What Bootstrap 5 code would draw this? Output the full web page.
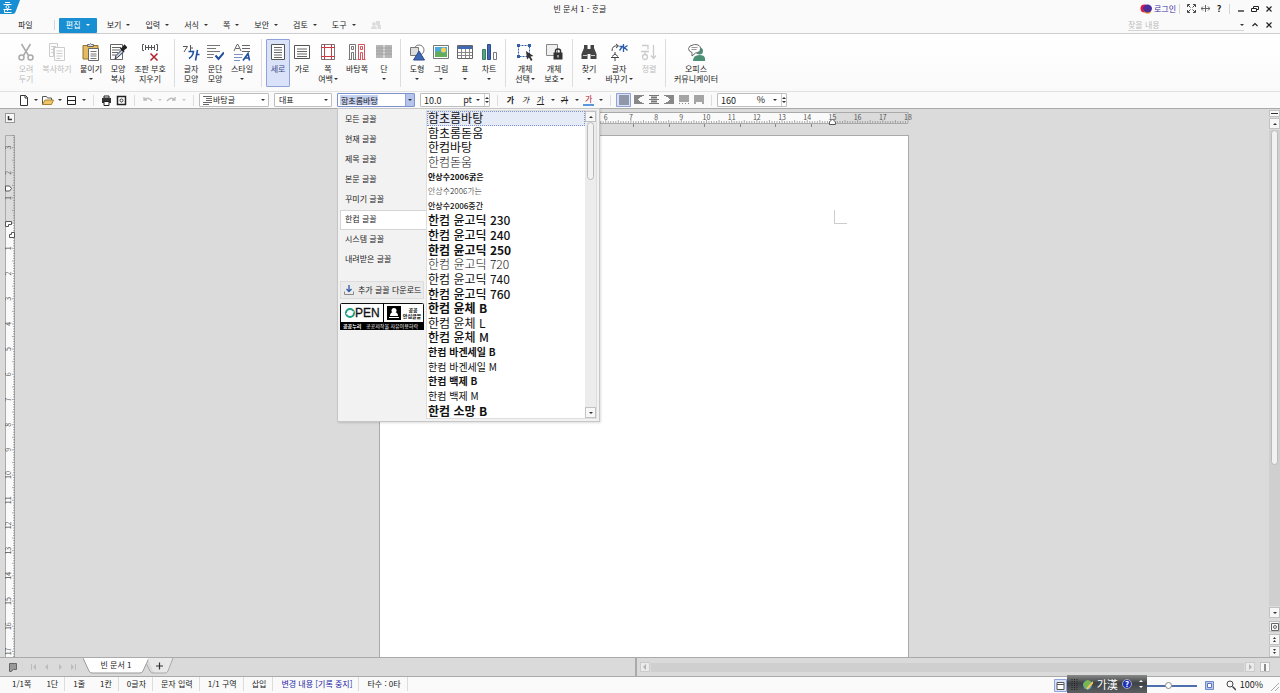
<!DOCTYPE html>
<html lang="ko">
<head>
<meta charset="utf-8">
<meta name="viewport" content="width=device-width, initial-scale=1">
<title>빈 문서 1 - ᄒᆞᆫ글</title>
<link href="https://cdn.jsdelivr.net/npm/bootstrap@5.3.0/dist/css/bootstrap.min.css" rel="stylesheet">
<style>
:root{--ink:#222;--edge:#bdbdbd;--desk:#dbdbdb;--blue:#178fd2}
body{font-family:"Noto Sans CJK KR","Noto Sans",sans-serif;font-size:8px;line-height:10px;color:var(--ink);background:#fafafa;overflow:hidden}
button,input,select{font:inherit;color:inherit}
button{background:none;border:0;padding:0;line-height:10px}
a{color:inherit;text-decoration:none}
svg{display:block;flex:none}
.caret{width:0;height:0;border:2px solid transparent;border-top-color:#333;border-bottom:0;flex:none}
/* title and menu */
.titlebar{height:17px}
.applogo{width:20px;height:14px}
.winbtn{width:14px;height:14px;display:flex;align-items:center;justify-content:center}
.thin{width:1px;height:10px;background:#d5d5d5;margin:0 4px 0 3px}
.menubar{height:17px;border-bottom:1px solid #cdcdcd}
.menubar .menu{display:flex;align-items:center;gap:5px;height:15px}
.menu-file{margin:0 18px 0 2px}
.menu-list{gap:15px;margin-left:10px}
.menu-on{background:var(--blue);color:#fff;width:38px;justify-content:center;border-radius:1px}
.menu-on .caret{border-top-color:#fff}
.find{width:116px;border-bottom:1px solid #d5d5d5;height:12px}
.find input{border:0;background:none;outline:0;padding:0;width:100px;height:11px}
.find input::placeholder{color:#bbb;opacity:1}
.login{color:#3b2fa8}
/* ribbon */
.ribbon{height:58px;padding:5px 14px 4px;background:linear-gradient(#fff,#fafafa);border-bottom:1px solid #e2e2e2}
.rb{display:flex;flex-direction:column;align-items:center;padding-top:3px;width:24px;white-space:nowrap;border:1px solid transparent}
.rb svg{margin-bottom:3px}
.rb .caret{margin-top:4px}
.rb span .caret{display:inline-block;margin:0 0 2px 1px}
.w-a{width:28px}.w-b{width:30px}.w-m{width:36px}.w-c{width:38px}.w-l{width:40px}.w-d{width:52px}
.rb.on{background:#d9e2f8;border-color:#8fa3d8;border-radius:1px;color:#3a4a86}
.off{color:#bbb}
.rsep{width:1px;margin:0 4px;background:#ddd}
/* toolbar */
.tools{height:17px;padding:0 16px;border-bottom:1px solid #aaa}
.tb{width:15px;height:14px;display:flex;align-items:center;justify-content:center}
.cr{width:9px;height:14px;display:flex;align-items:center;justify-content:center}
.tb.on{background:#d9e2f8;box-shadow:inset 0 0 0 1px #8fa3d8;border-radius:1px}
.tsep{width:1px;height:11px;background:#ddd;margin:0 5px}
.fields{display:flex;gap:5px;margin-right:2px}
.field{height:14px;border:1px solid var(--edge);border-radius:1px;background:#fff;display:flex;align-items:center;position:relative}
.field select{appearance:none;border:0;background:none;width:100%;height:12px;padding:0 8px 0 4px;outline:0}
.field input{border:0;background:none;outline:0;padding:0 0 0 3px;height:12px;min-width:0}
.field>.caret{position:absolute;right:3px;top:5px}
.f-style{width:70px}.f-lang{width:58px}.f-font{width:78px}.f-size,.f-zoom{width:70px}
.f-style select{padding-left:13px}
.f-style svg{position:absolute;left:3px;top:2px}
.f-font{border-color:#7d92cf}
.f-font .pick{width:9px;height:12px;background:#b5c4ec;border-left:1px solid #8fa3d8;display:flex;align-items:center;justify-content:center}
.f-font input{background:linear-gradient(#c5d1f0,#c5d1f0) 2px 1px/38px 10px no-repeat;flex:1}
.spin{width:9px;border-left:1px solid #ccc;height:12px;display:flex;flex-direction:column;justify-content:space-evenly;align-items:center}
.up{transform:rotate(180deg)}
.num{font-size:9px}
/* font menu */
.fontmenu{position:absolute;left:-1px;top:14px;width:263px;height:314px;background:#f2f2f2;border:1px solid #c6c6c6;box-shadow:1px 1px 2px #0002;z-index:5;padding:1px 2px 2px}
.kinds{width:86px}
.kinds .list-group-item{font-size:8px;line-height:10px;height:20px;padding:3px 0 5px 4px;border:1px solid transparent;background:none;color:var(--ink);border-radius:0;text-align:left;margin:0}
.kinds .list-group-item.now{background:#fff;border-color:#d5d5d5;border-right:0}
.getfont{width:84px;height:18px;margin-top:11px;border:1px solid #ddd;background:#ebebeb;display:flex;align-items:center;gap:4px;padding-left:3px;white-space:nowrap}
.open-mark{margin-top:4px}
.faces{background:#fff;border:1px solid #ddd}
.faces ul{margin:0;padding:0;list-style:none;display:flex;flex-direction:column;width:158px}
.faces li{flex:1;font-size:12px;line-height:14px;padding-left:1px;white-space:nowrap;color:#111}
.faces li.now{background:#e6ebf8;outline:1px dotted #7d92cf;outline-offset:-1px}
.faces .slim{font-size:8px}
.faces .mid{font-size:10px}
.lt{font-weight:300}.bd{font-weight:700}.md{font-weight:500}
.vbar{width:11px;background:#ececec}
.sbtn{width:11px;height:11px;border:1px solid #c2c2c2;background:#f7f7f7;display:flex;align-items:center;justify-content:center}
.thumb{width:7px;margin:0 2px;background:#f2f2f2;border:1px solid #bbb;border-radius:4px}
.vbar .thumb{height:58px}
/* document */
.desk{background:var(--desk);min-height:0}
.side{width:18px;padding:4px 0 0 5px}
.tabkind{width:10px;height:10px;border:1px solid #999;background:#f7f7f7}
.vruler{margin-top:12px}
.center{min-width:0;padding-top:3px}
.paper{width:100%;max-width:530px;margin-top:6px;background:#fff;border:1px solid #aaa;border-bottom:0}
.cropmark{width:13px;height:14px;border:solid #ccc;border-width:0 0 1px 1px;margin:74px 61px 0 auto}
.right{width:11px;padding-top:1px;gap:1px}
.right .track{flex:1;background:#cfcfcf}
.right .thumb{height:335px}
.sbtn.flat{height:7px}
.sbtn.seek{margin:2px 0 1px}
/* tabs, status */
.tabrow{height:20px;background:#dadada;border:solid #aaa;border-width:1px 0}
.nav-mark{width:13px;display:flex;justify-content:center}
.doctab{position:relative;height:16px;width:66px;padding:0 0 2px}
.doctab svg{position:absolute;left:0;top:0}
.doctab span{position:relative}
.plus{position:relative;width:28px;height:16px;margin-left:-3px}
.hbar{border-left:2px solid #aaa;padding:0 2px 0 3px;width:50.7%;gap:1px}
.hbar .track{flex:1;background:#cfcfcf;height:9px}
.hbar .sbtn{width:10px;height:10px;opacity:.6}
.status{height:16px}
.status>.cell{border-right:1px solid #ddd;height:14px;padding:2px 6px 0 8px;white-space:nowrap}
.status>.bare{border-color:transparent}
.changes{color:#1c1ca8}
.ime{background:linear-gradient(#8a8a8a,#3e4244 45%,#5c6062);width:80px;height:18px;margin-top:-2px;color:#fff;z-index:2;position:relative;font-size:11px;line-height:14px;white-space:nowrap;gap:4px}
.ime .caret{border-top-color:#fff}
.scale-slider{appearance:none;width:50px;height:7px;background:linear-gradient(#4d6fae,#4d6fae) 0 3px/100% 2px no-repeat}
.scale-slider::-webkit-slider-thumb{appearance:none;width:7px;height:7px;border:1px solid #888;border-radius:50%;background:#fff}
</style>
</head>
<body class="d-flex flex-column vh-100">
<header>
 <div class="titlebar d-flex align-items-center">
  <svg class="applogo align-self-start" viewBox="0 0 20 14"><path d="M0 0h20l-4.500 12q-.7 2-3 2H0z" fill="#178fd2"/><path d="M5 2.500h5M3.500 4.500h8M7.500 9.500v1.500M3.500 9.500h8M4.500 10v2.500h7" stroke="#fff" fill="none"/><circle cx="7.500" cy="7" r="1.500" fill="none" stroke="#fff"/></svg>
  <div class="flex-fill text-center">빈 문서 1 - ᄒᆞᆫ글</div>
  <div class="d-flex align-items-center pe-1">
   <a href="#" class="login d-flex align-items-center"><svg width="14" height="10" viewBox="0 0 14 10"><circle cx="4.500" cy="4.500" r="4" fill="#e2173f"/><circle cx="7.500" cy="6" r="3.800" fill="#f39a2b"/><ellipse cx="7.500" cy="4.500" rx="4.500" ry="4" fill="#4b2e9d"/></svg>로그인</a>
   <i class="thin"></i>
   <button class="winbtn" aria-label="전체 화면"><svg width="9" height="9" viewBox="0 0 9 9" fill="none" stroke="#333"><path d="M.5 3V.5H3M6 .5h2.500V3M8.500 6v2.500H6M3 8.500H.5V6M1 1l2.500 2.500M8 1L5.500 3.500M8 8L5.500 5.500M1 8l2.500-2.500" stroke-width=".9"/></svg></button>
   <button class="winbtn" aria-label="창 나누기"><svg width="9" height="9" viewBox="0 0 9 9" fill="none" stroke="#666"><path d="M4.500 1v7M0 4.500h9M2 2.500l-2 2 2 2M7 2.500l2 2-2 2"/></svg></button>
   <button class="winbtn fw-bold num" aria-label="도움말">?</button>
   <i class="thin"></i>
   <button class="winbtn" aria-label="최소화"><svg width="8" height="8"><path d="M1 6h6" stroke="#222" stroke-width="1.300"/></svg></button>
   <button class="winbtn" aria-label="이전 크기로"><svg width="8" height="8" fill="none" stroke="#222"><path d="M2.500 3V1.500h5v3H6M.5 3.500h5v3h-5z"/></svg></button>
   <button class="winbtn" aria-label="닫기"><svg width="8" height="8"><path d="M1.500 1.500l5 5M6.500 1.500l-5 5" stroke="#222" stroke-width="1.200"/></svg></button>
  </div>
 </div>
 <nav class="menubar d-flex align-items-center ps-3 pe-1">
  <a href="#" class="menu menu-file">파일</a><i class="thin"></i>
  <button class="menu menu-on">편집<i class="caret"></i></button>
  <div class="menu-list d-flex">
   <button class="menu">보기<i class="caret"></i></button><button class="menu">입력<i class="caret"></i></button><button class="menu">서식<i class="caret"></i></button><button class="menu">쪽<i class="caret"></i></button><button class="menu">보안<i class="caret"></i></button><button class="menu">검토<i class="caret"></i></button><button class="menu">도구<i class="caret"></i></button>
   <button class="menu" aria-label="공유"><svg width="10" height="10" fill="#ddd"><circle cx="3" cy="4" r="2"/><path d="M5 1h4v4H5zM0 9q0-3 3-3t3 3zM6 5h4v4H7z"/></svg></button>
  </div>
  <label class="find d-flex align-items-center ms-auto me-1"><input type="text" placeholder="찾을 내용" aria-label="찾을 내용"><i class="caret ms-auto"></i></label>
  <button class="winbtn" aria-label="리본 접기"><svg width="8" height="8"><path d="M1.500 5L4 2.500 6.500 5" stroke="#222" fill="none" stroke-width="1.200"/></svg></button>
  <button class="winbtn" aria-label="문서 닫기"><svg width="8" height="8"><path d="M1.500 1.500l5 5M6.500 1.500l-5 5" stroke="#222" stroke-width="1.200"/></svg></button>
 </nav>
 <div class="ribbon d-flex">
  <button class="rb off"><svg width="18" height="18" fill="none" stroke="#aaa" stroke-width="1.500"><path d="M4.500 1l7 11.500M13.500 1l-7 11.500"/><circle cx="4.500" cy="14.500" r="2.500"/><circle cx="13.500" cy="14.500" r="2.500"/></svg><span>오려</span><span>두기</span></button>
  <button class="rb w-c off"><svg width="18" height="18" fill="#fdfdfd" stroke="#ccc"><path d="M1.500.5h8v4h-4v9h-4zM3 3.500h5M3 6.500h2M3 9.500h2M6.500 4.500h10v13h-10zM8.500 8h6M8.500 10.500h6M8.500 13h6M8.500 15.500h4"/></svg><span>복사하기</span></button>
  <button class="rb w-b"><svg width="18" height="18"><path d="M1 2.500h15V16H1z" fill="#e5ba61" stroke="#93752f"/><path d="M5.500 3.500v-2h2L8.500.5l1 1h2v2z" fill="#ddd" stroke="#666"/><path d="M6.500 5.500h10v12h-10z" fill="#fff" stroke="#666"/><path d="M8.500 8.500h6M8.500 11h6M8.500 13h6M8.500 15.500h6" stroke="#777"/></svg><span>붙이기</span><i class="caret"></i></button>
  <button class="rb"><svg width="18" height="18"><path d="M1.500 1.500h12v15h-12z" fill="#fff" stroke="#666"/><path d="M3 4.500h9M3 7h8M3 9.500h6M3 12h4" stroke="#666"/><path d="M6 16l1-3.500 6-6 2 2-6.500 6z" fill="#b8cbea" stroke="#333"/><path d="M11.500 5l3.500 3.500M12.500 6.500l3-4 2 2-4 3z" stroke="#222" stroke-width="1.500" fill="#222"/></svg><span>모양</span><span>복사</span></button>
  <button class="rb w-l"><svg width="18" height="18" fill="none" stroke="#555"><path d="M3 1.500H1.500v6H3M15 1.500h1.500v6H15M4.500 2v5M7.500 2v5M10.500 2v5M13.500 2v5M4 4.500h10"/><path d="M9.500 10.500l7 7M16.500 10.500l-7 7" stroke="#b0202e" stroke-width="1.500"/></svg><span>조판 부호</span><span>지우기</span></button>
  <i class="rsep"></i>
  <button class="rb"><svg width="18" height="18" fill="none"><path d="M1 3.500h4.500L2 9M8.500 2v6M8.500 5H11" stroke="#555"/><path d="M6.500 8.500h5Q11 13 7 15.500M15.500 7l-2 10.500M14.500 11.500h3" stroke="#1f4fa0" stroke-width="1.600"/></svg><span>글자</span><span>모양</span></button>
  <button class="rb"><svg width="18" height="18" fill="none"><path d="M1 2.500h13M1 5.500h9M1 8.500h13M1 11.500h7M1 14.500h6" stroke="#777"/><path d="M9.500 12.500l3 3.500L18 9.500" stroke="#1f4fa0" stroke-width="2"/></svg><span>문단</span><span>모양</span></button>
  <button class="rb w-b"><svg width="18" height="18" fill="none"><path d="M1 8L4 1.500h1L8 8M2.500 5.500h4M9 2.500h8M9 5.500h8M9 8.500h8" stroke="#666"/><path d="M10 17.500l5-7 1.500 7M12 15h4" stroke="#1f4fa0" stroke-width="1.600"/><path d="M1 11.500h9M1 14.500h8M1 17.500h6" stroke="#7a93c4"/></svg><span>스타일</span><i class="caret"></i></button>
  <i class="rsep"></i>
  <button class="rb on"><svg width="18" height="18"><path d="M2.500 1.500h13v15h-13z" fill="#fff" stroke="#555"/><path d="M5 4.500h8M5 7h8M5 9.500h8M5 12h8M5 14.500h8" stroke="#666"/></svg><span>세로</span></button>
  <button class="rb"><svg width="18" height="18"><path d="M1.500 2.500h15v13h-15z" fill="#fff" stroke="#555"/><path d="M4 6h10M4 8.500h10M4 11h10M4 13.500h10" stroke="#666"/></svg><span>가로</span></button>
  <button class="rb w-a"><svg width="18" height="18" fill="none"><path d="M2.500 1.500h13v15h-13z" stroke="#777" fill="#fff"/><path d="M5.500 1v16M12.500 1v16M2 4.500h14M2 13.500h14" stroke="#cc3b44"/></svg><span>쪽</span><span>여백<i class="caret"></i></span></button>
  <button class="rb w-b"><svg width="18" height="18" fill="none"><path d="M1.500 16V1.500h6V16M3.500 17V9.500h2V17M3.500 3.500h2v3h-2z" stroke="#777"/><path d="M.5 16.500h3M5.500 16.500h3" stroke="#777"/><path d="M10.500 16V1.500h6V16M12.500 17V9.500h2V17M12.500 3.500h2v3h-2z" stroke="#d4555e"/><path d="M9.500 16.500h3M14.500 16.500h3" stroke="#d4555e"/></svg><span>바탕쪽</span></button>
  <button class="rb"><svg width="18" height="18"><path d="M1 2h7.500v13H1zM9.500 2H17v13H9.500z" fill="#b5b5b5"/><path d="M1 5h16M1 8h16M1 11h16" stroke="#a2a2a2"/></svg><span>단</span><i class="caret"></i></button>
  <i class="rsep"></i>
  <button class="rb"><svg width="18" height="18"><circle cx="11" cy="7" r="5" fill="#fff" stroke="#777"/><path d="M2.500 4.500h8v8h-8z" fill="#ddd" stroke="#777"/><path d="M11 8l5.500 9h-11z" fill="#3e67b3" stroke="#2b4b8c"/></svg><span>도형</span><i class="caret"></i></button>
  <button class="rb"><svg width="18" height="18"><path d="M1.500 2.500h15v13h-15z" fill="#fff" stroke="#777"/><path d="M3 4h12v10H3z" fill="#4aa9df"/><path d="M3 14v-4q4-4 7 0l5-1v5z" fill="#63ad5a"/><circle cx="11.500" cy="7" r="2.500" fill="#f9d34b"/></svg><span>그림</span><i class="caret"></i></button>
  <button class="rb"><svg width="18" height="18"><path d="M1.500 2.500h15v13h-15z" fill="#fff" stroke="#666"/><path d="M2 3h14v3H2z" fill="#4169b0"/><path d="M2 9.500h14M2 12.500h14M5.500 6v9M9.500 6v9M13.500 6v9" stroke="#888"/></svg><span>표</span><i class="caret"></i></button>
  <button class="rb"><svg width="18" height="18"><path d="M2.500 6.500h3v10h-3z" fill="#57a184" stroke="#398064"/><path d="M7.500 1.500h3v15h-3z" fill="#3e67b3" stroke="#2b4b8c"/><path d="M13.500 9.500h3v7h-3z" fill="#fff" stroke="#777"/></svg><span>차트</span><i class="caret"></i></button>
  <i class="rsep"></i>
  <button class="rb w-b"><svg width="18" height="18"><path d="M2.500 2.500h11v11h-11z" fill="none" stroke="#345ca8" stroke-dasharray="2 1"/><path d="M1 1h3v3H1zM12 1h3v3h-3zM1 12h3v3H1z" fill="#345ca8"/><path d="M10 8l7.500 5-3 .5 2 3.500-1.500 1-2-3.500-2 2z" fill="#333"/></svg><span>개체</span><span>선택<i class="caret"></i></span></button>
  <button class="rb w-a"><svg width="18" height="18"><path d="M1.500 1.500h11v11h-11z" fill="#f0f0f0" stroke="#888"/><path d="M8.500 9.500h9v7h-9z" fill="#333"/><path d="M10.500 10V8q0-2 2.500-2t2.500 2v2" fill="none" stroke="#333" stroke-width="1.500"/><path d="M13 12v2.500" stroke="#fff"/></svg><span>개체</span><span>보호<i class="caret"></i></span></button>
  <i class="rsep"></i>
  <button class="rb"><svg width="18" height="18" fill="#444"><path d="M4 2h3.500v4h3V2H14v3l2.500 6v5h-6v-5h-3v5h-6v-5L4 5z"/><path d="M3 12.500h4M11 12.500h4" stroke="#ccc"/></svg><span>찾기</span><i class="caret"></i></button>
  <button class="rb w-m"><svg width="18" height="18" fill="none"><path d="M2 8q0-6 6-5M6 1l2.500 2L6 5" stroke="#444"/><path d="M13.500 1v8M9.500 3.500h3l-3 4M17.500 2.500l-3 2 3 3" stroke="#2c5cad" stroke-width="1.300"/><path d="M5 9v2l-3 2.500M5 11l3 2.500M1 14.500h8M5 15v3" stroke="#444"/></svg><span>글자</span><span>바꾸기<i class="caret"></i></span></button>
  <button class="rb off"><svg width="18" height="18" fill="none" stroke="#ccc" stroke-width="1.300"><path d="M2 2.500h6v4M1 8.500h8M5 9v2"/><circle cx="5" cy="14" r="2.500"/><path d="M13.500 2v13M11 12.500l2.500 3 2.500-3"/></svg><span>정렬</span></button>
  <i class="rsep"></i>
  <button class="rb w-d"><svg width="18" height="18"><circle cx="12.500" cy="8" r="3.500" fill="#4c9076"/><path d="M6 18q0-6 6.500-6t5.500 6z" fill="#4c9076"/><path d="M7.500 1.500q6 0 6 4t-5 4.500L5 13v-3.500q-3.500-1-3.500-4t6-4z" fill="#fff" stroke="#666"/><path d="M4.500 4.500h6M4.500 6.500h5" stroke="#999"/></svg><span>오피스</span><span>커뮤니케이터</span></button>
 </div>
 <div class="tools d-flex align-items-center">
  <button class="tb" aria-label="새 문서"><svg width="10" height="11"><path d="M1.500.5h5l2 2v8h-7zM6 .5V3h2.500" fill="#fff" stroke="#333"/></svg></button><button class="cr" aria-label="새 문서 메뉴"><i class="caret"></i></button>
  <button class="tb" aria-label="열기"><svg width="12" height="11"><path d="M.5 9.500v-8h4l1 1.500h4V5" fill="#fff" stroke="#555"/><path d="M.5 9.500L3 5h8.500L9.500 9.500z" fill="#efc667" stroke="#a8812f"/></svg></button><button class="cr" aria-label="열기 메뉴"><i class="caret"></i></button>
  <button class="tb" aria-label="저장"><svg width="11" height="11"><path d="M1.500 1.500v8h8v-8zM1.500 5.500h8" fill="none" stroke="#222"/></svg></button><button class="cr" aria-label="저장 메뉴"><i class="caret"></i></button>
  <i class="tsep"></i>
  <button class="tb" aria-label="인쇄"><svg width="11" height="11"><path d="M3 1h5v2H3z" stroke="#222" fill="#fff"/><path d="M1 3h9v5H1z" fill="#333"/><path d="M3 6.500h5v4H3z" fill="#fff" stroke="#222"/></svg></button>
  <button class="tb" aria-label="미리 보기"><svg width="11" height="11"><path d="M1.500 1.500h8v8h-8z" fill="#fff" stroke="#222" stroke-width="1.500"/><circle cx="5.500" cy="5.500" r="1.500" fill="none" stroke="#333"/></svg></button>
  <i class="tsep"></i>
  <button class="tb" aria-label="되돌리기"><svg width="11" height="10" fill="none" stroke="#bbb" stroke-width="1.300"><path d="M2 2v3h3M2 5q4-4 8 1"/></svg></button><button class="cr" aria-label="되돌리기 목록"><i class="caret opacity-25"></i></button>
  <button class="tb" aria-label="다시 실행"><svg width="11" height="10" fill="none" stroke="#bbb" stroke-width="1.300"><path d="M9 2v3H6M9 5Q5 1 1 6"/></svg></button><button class="cr" aria-label="다시 실행 목록"><i class="caret opacity-25"></i></button>
  <i class="tsep"></i>
  <div class="fields">
   <div class="field f-style"><svg width="9" height="9" stroke="#666"><path d="M0 .5h9M3 2.500h6M3 4.500h6M0 6.500h9M0 8.500h6"/></svg><select aria-label="스타일"><option>바탕글</option></select><i class="caret"></i></div>
   <div class="field f-lang"><select aria-label="언어"><option>대표</option></select><i class="caret"></i></div>
   <div class="field f-font"><input type="text" value="함초롬바탕" aria-label="글꼴"><button class="pick" aria-label="글꼴 목록"><i class="caret"></i></button>
    <div class="fontmenu d-flex">
     <div class="kinds">
      <div class="list-group">
       <button class="list-group-item">모든 글꼴</button><button class="list-group-item">현재 글꼴</button><button class="list-group-item">제목 글꼴</button><button class="list-group-item">본문 글꼴</button><button class="list-group-item">꾸미기 글꼴</button><button class="list-group-item now">한컴 글꼴</button><button class="list-group-item">시스템 글꼴</button><button class="list-group-item">내려받은 글꼴</button>
      </div>
      <button class="getfont"><svg width="10" height="10" fill="none"><path d="M5 0v6M2.500 4L5 6.500 7.500 4" stroke="#2d5aa8" stroke-width="1.300"/><path d="M.5 6.500v3h9v-3" stroke="#888"/></svg>추가 글꼴 다운로드</button>
      <svg class="open-mark" width="84" height="27" viewBox="0 0 84 27" font-family="Noto Sans CJK KR"><rect x=".5" y=".5" width="83" height="26" rx="1" fill="#fff" stroke="#111"/><path d="M0 19h84v8H0zM43 0h1v19h-1z"/><circle cx="10" cy="10" r="4" fill="none" stroke="#1e9d86" stroke-width="2"/><path d="M6 11q4-3 8-2" stroke="#fff" fill="none"/><text x="15" y="14" font-size="12" font-family="Liberation Sans" fill="#111" stroke="#111" stroke-width=".3">PEN</text><path d="M47 3h14v14H47z"/><circle cx="54" cy="7.500" r="2.500" fill="#fff"/><path d="M50 13q0-4 4-4t4 4zM49 14h10v1H49z" fill="#fff"/><text x="73" y="9" font-size="5" font-weight="700" text-anchor="middle">공공</text><text x="72" y="15" font-size="5" font-weight="700" text-anchor="middle">안심글꼴</text><text x="3" y="25" font-size="5" font-weight="700" fill="#fff">공공누리</text><text x="26" y="25" font-size="5" fill="#fff">공공저작물 자유이용허락</text></svg>
     </div>
     <div class="faces d-flex flex-fill">
      <ul role="listbox" aria-label="글꼴">
       <li class="now">함초롬바탕</li><li>함초롬돋움</li><li>한컴바탕</li><li class="lt">한컴돋움</li><li class="slim bd">안상수2006굵은</li><li class="slim lt">안상수2006가는</li><li class="slim md">안상수2006중간</li><li class="md">한컴 윤고딕 230</li><li class="md">한컴 윤고딕 240</li><li class="bd">한컴 윤고딕 250</li><li class="lt">한컴 윤고딕 720</li><li>한컴 윤고딕 740</li><li class="md">한컴 윤고딕 760</li><li class="bd">한컴 윤체 B</li><li>한컴 윤체 L</li><li class="md">한컴 윤체 M</li><li class="mid bd">한컴 바겐세일 B</li><li class="mid">한컴 바겐세일 M</li><li class="mid bd">한컴 백제 B</li><li class="mid">한컴 백제 M</li><li class="bd">한컴 소망 B</li>
      </ul>
      <div class="vbar d-flex flex-column"><button class="sbtn" aria-label="위로"><i class="caret up"></i></button><div class="thumb"></div><button class="sbtn mt-auto" aria-label="아래로"><i class="caret"></i></button></div>
     </div>
    </div>
   </div>
   <div class="field f-size num"><input class="flex-fill" type="text" value="10.0" aria-label="글자 크기"><span>pt</span><i class="caret position-static mx-1"></i><div class="spin"><i class="caret up"></i><i class="caret"></i></div></div>
  </div>
  <i class="tsep"></i>
  <button class="tb fw-bold">가</button><button class="tb fst-italic">가</button><button class="tb text-decoration-underline">가</button><button class="cr" aria-label="밑줄 메뉴"><i class="caret"></i></button>
  <button class="tb text-decoration-line-through">가</button><button class="cr" aria-label="취소선 메뉴"><i class="caret"></i></button>
  <button class="tb" aria-label="글자 색"><svg width="11" height="13"><text x="2" y="8" font-size="8" fill="#b3202c">가</text><path d="M0 10h11v2H0z" fill="#5b97dd"/></svg></button><button class="cr" aria-label="글자 색 메뉴"><i class="caret"></i></button>
  <i class="tsep"></i>
  <button class="tb on" aria-label="양쪽 정렬"><svg width="10" height="10"><path d="M0 0h10v10H0z" fill="#8f97a9"/></svg></button>
  <button class="tb" aria-label="왼쪽 정렬"><svg width="10" height="10" stroke="#888"><path d="M0 .5h10M0 2.500h6M0 4.500h4M0 6.500h6M0 8.500h10M0 1.500h8M0 3.500h5M0 5.500h5M0 7.500h8"/></svg></button>
  <button class="tb" aria-label="가운데 정렬"><svg width="10" height="10" stroke="#777"><path d="M0 .5h10M2 2.500h6M0 4.500h10M2 6.500h6M0 8.500h10"/><path d="M2 1.500h6M2 3.500h6M2 5.500h6M2 7.500h6" stroke="#bbb"/></svg></button>
  <button class="tb" aria-label="오른쪽 정렬"><svg width="10" height="10" stroke="#888"><path d="M0 .5h10M4 2.500h6M6 4.500h4M4 6.500h6M0 8.500h10M2 1.500h8M5 3.500h5M5 5.500h5M2 7.500h8"/></svg></button>
  <button class="tb" aria-label="배분 정렬"><svg width="10" height="10"><path d="M0 0h10v7H0z" fill="#a5a5a5"/><path d="M0 8.500h10" stroke="#888" stroke-dasharray="1 2"/></svg></button>
  <button class="tb" aria-label="나눔 정렬"><svg width="10" height="10"><path d="M0 0h10v7H0zM0 7h2v2H0zM8 7h2v2H8z" fill="#a5a5a5"/></svg></button>
  <i class="tsep"></i>
  <div class="field f-zoom num"><input class="flex-fill" type="text" value="160" aria-label="줄 간격"><span>%</span><i class="caret position-static mx-1 ms-2"></i><div class="spin"><i class="caret up"></i><i class="caret"></i></div></div>
 </div>
</header>

<main class="desk d-flex flex-fill overflow-hidden">
 <div class="side d-flex flex-column">
  <div class="tabkind"><svg width="8" height="8"><path d="M2.500 2v3.500H6" stroke="#333" fill="none" stroke-width="1.500"/></svg></div>
  <svg id="vruler" class="vruler" width="12" height="530" font-size="7" fill="#555"></svg>
 </div>
 <div class="center flex-fill d-flex flex-column align-items-center">
  <svg id="hruler" width="530" height="17" font-size="7" fill="#555" overflow="visible"></svg>
  <div class="paper flex-fill"><div class="cropmark"></div></div>
 </div>
 <div class="right d-flex flex-column">
  <button class="sbtn flat" aria-label="나누기"><svg width="7" height="3"><path d="M0 1.500h7" stroke="#333"/></svg></button>
  <button class="sbtn" aria-label="위로"><i class="caret up"></i></button>
  <div class="track"><div class="thumb"></div></div>
  <button class="sbtn" aria-label="아래로"><i class="caret"></i></button>
  <button class="sbtn seek" aria-label="찾아가기"><svg width="8" height="8" fill="none" stroke="#666"><path d="M.5.5h7v7h-7z"/><circle cx="4" cy="4" r="1.500"/></svg></button>
  <button class="sbtn" aria-label="이전 쪽"><svg width="3" height="5" fill="#333"><path d="M0 2L1.500 0 3 2zM0 5l1.500-2L3 5z"/></svg></button>
  <button class="sbtn" aria-label="다음 쪽"><svg width="3" height="5" fill="#333"><path d="M0 0h3L1.500 2zM0 3h3L1.500 5z"/></svg></button>
 </div>
</main>

<footer>
 <div class="tabrow d-flex align-items-center ps-2">
  <button aria-label="문서 목록"><svg width="10" height="10"><path d="M1.500 1.500h7v6h-3L3 9.500H1.500z" fill="#999" stroke="#666"/></svg></button><i class="thin ms-1"></i>
  <button class="nav-mark" aria-label="처음 탭"><svg width="6" height="6" fill="#bbb"><path d="M0 0h1v6H0zM5 0v6L2 3z"/></svg></button><button class="nav-mark" aria-label="이전 탭"><svg width="4" height="6" fill="#bbb"><path d="M3 0v6L0 3z"/></svg></button><button class="nav-mark" aria-label="다음 탭"><svg width="4" height="6" fill="#bbb"><path d="M1 0v6l3-3z"/></svg></button><button class="nav-mark" aria-label="마지막 탭"><svg width="6" height="6" fill="#bbb"><path d="M5 0h1v6H5zM1 0v6l3-3z"/></svg></button>
  <button class="doctab align-self-start ms-1"><svg width="66" height="16"><path d="M0 0h66l-6 13q-1 2-3 2H9q-2 0-3-2z" fill="#fff"/><path d="M0 0l6 13q1 2 3 2h48q2 0 3-2l6-13" fill="none" stroke="#999"/></svg><span>빈 문서 1</span></button>
  <button class="plus align-self-start" aria-label="새 탭"><svg width="28" height="16"><path d="M2 1l5 12q1 2 3 2h9q2 0 3-2l5-13H2z" fill="#e8e8e8"/><path d="M0 5l4 8q1 2 3 2h12q2 0 3-2l5-13" fill="none" stroke="#aaa"/><path d="M10 8h7M13.500 4.500v7" stroke="#333" stroke-width="1.200"/></svg></button>
  <div class="hbar d-flex align-items-center h-100 ms-auto">
   <button class="sbtn" aria-label="왼쪽으로"><svg width="4" height="6" fill="#999"><path d="M3 0v6L0 3z"/></svg></button><div class="track"></div><button class="sbtn" aria-label="오른쪽으로"><svg width="4" height="6" fill="#999"><path d="M1 0v6l3-3z"/></svg></button>
   <div class="sbtn opacity-100 ms-1 me-2"><svg width="2" height="7"><path d="M1 0v7" stroke="#222"/></svg></div>
  </div>
 </div>
 <div class="status d-flex ps-1">
  <span class="cell bare ps-2">1/1쪽</span><span class="cell">1단</span><span class="cell bare">1줄</span><span class="cell">1칸</span><span class="cell">0글자</span><span class="cell">문자 입력</span><span class="cell">1/1 구역</span><span class="cell">삽입</span><a href="#" class="cell changes">변경 내용 [기록 중지]</a><span class="cell">타수 : 0타</span>
  <div class="d-flex align-items-center ms-auto">
   <button aria-label="쪽 윤곽"><svg width="13" height="13"><path d="M.5.5h12v12H.5z" fill="#d9e2f8" stroke="#8fa3d8"/><path d="M3 3.500h7v7H3zM3 5.500h7" fill="#fff" stroke="#555"/></svg></button>
   <div class="ime d-flex align-items-center px-1"><svg width="7" height="11"><path d="M1 0v11M3.500 0v11M6 0v11" stroke="#222" stroke-dasharray="1 1"/></svg><svg width="11" height="11"><circle cx="5.500" cy="6" r="4.500" fill="#4f9fd6"/><path d="M1 5l3 5 5-8-4-1z" fill="#7ab648"/><path d="M5 10l6-7" stroke="#f1c84c" stroke-width="2"/></svg><span>가漢</span><svg width="10" height="10"><circle cx="5" cy="5" r="4.500" fill="#1b2fb8" stroke="#aab"/><text x="5" y="8" font-size="8" font-weight="700" fill="#fff" text-anchor="middle">?</text></svg><div class="ms-auto d-flex flex-column gap-1"><i class="caret up"></i><i class="caret"></i></div></div>
   <input class="scale-slider" type="range" min="0" max="100" value="42" aria-label="확대/축소">
   <button class="ms-2" aria-label="폭 맞춤"><svg width="9" height="9"><path d="M.5.5h8v8h-8z" fill="#b9c9ee" stroke="#6f8acb"/><path d="M2.500 2.500h4v4h-4z" fill="#fff" stroke="#5a74b8"/></svg></button>
   <svg class="ms-2 me-1 ps-1" width="14" height="11" fill="none" stroke="#444"><circle cx="4" cy="4" r="3"/><path d="M6.500 6.500L10 10" stroke-width="1.500"/></svg>
   <span class="num">100%</span>
   <svg class="ms-2" width="9" height="14" stroke="#aaa"><path d="M0 13l8-8M4 13l4-4"/></svg>
  </div>
 </div>
</footer>
<script src="https://cdn.jsdelivr.net/npm/bootstrap@5.3.0/dist/js/bootstrap.bundle.min.js"></script>
<script>
// Rulers are marked in centimetres; one centimetre is 529/21 pixels at this zoom.
const cm = 529 / 21;
function horizontalRuler() {
  let s = `<rect x="${3 * cm}" y="0" width="${15 * cm}" height="11" fill="#fafafa"/><path d="M0 .5H529M0 11.500H529M.5 0V11M529 0V11" stroke="#aaa"/>`;
  for (let i = 0; i < 210; i++) s += `<path d="M${i * cm / 10} ${i % 5 ? 9 : 8}V11" stroke="#888" stroke-width=".7"/>`;
  for (let i = 0; i <= 21; i++) s += `<text x="${i * cm}" y="8" text-anchor="middle">${Math.abs(i - 3)}</text>`;
  for (let x = 254; x < 440; x += 35.5) s += `<path d="M${Math.round(x) + .5} 12v3" stroke="#888"/>`;
  s += `<path d="M${18 * cm - 3} 12.500v-2.500l3-3 3 3v2.500z" fill="#fff" stroke="#555"/>`;
  document.getElementById('hruler').innerHTML = s;
}
function verticalRuler() {
  const zero = 3.5 * cm;
  let s = `<rect x="0" y="${zero}" width="9" height="450" fill="#fafafa"/><path d="M.5 530V.5H9.500V530" fill="none" stroke="#aaa"/>`;
  for (let i = 0; i < 210; i++) s += `<path d="M${i % 5 ? 8 : 7} ${i * cm / 10}H10" stroke="#888" stroke-width=".7"/>`;
  for (let n = -3; n < 18; n++) if (n) s += `<text transform="translate(6 ${zero + n * cm}) rotate(-90)" text-anchor="middle">${Math.abs(n)}</text>`;
  s += `<path d="M.5 51v5h4l2-2.500-2-2.500zM.5 86.500h6v3h-3v2h-3zM9.500 97.500v5h-5v-3h2v-2z" fill="#fff" stroke="#555"/>`;
  document.getElementById('vruler').innerHTML = s;
}
horizontalRuler();
verticalRuler();
</script>
</body>
</html>
